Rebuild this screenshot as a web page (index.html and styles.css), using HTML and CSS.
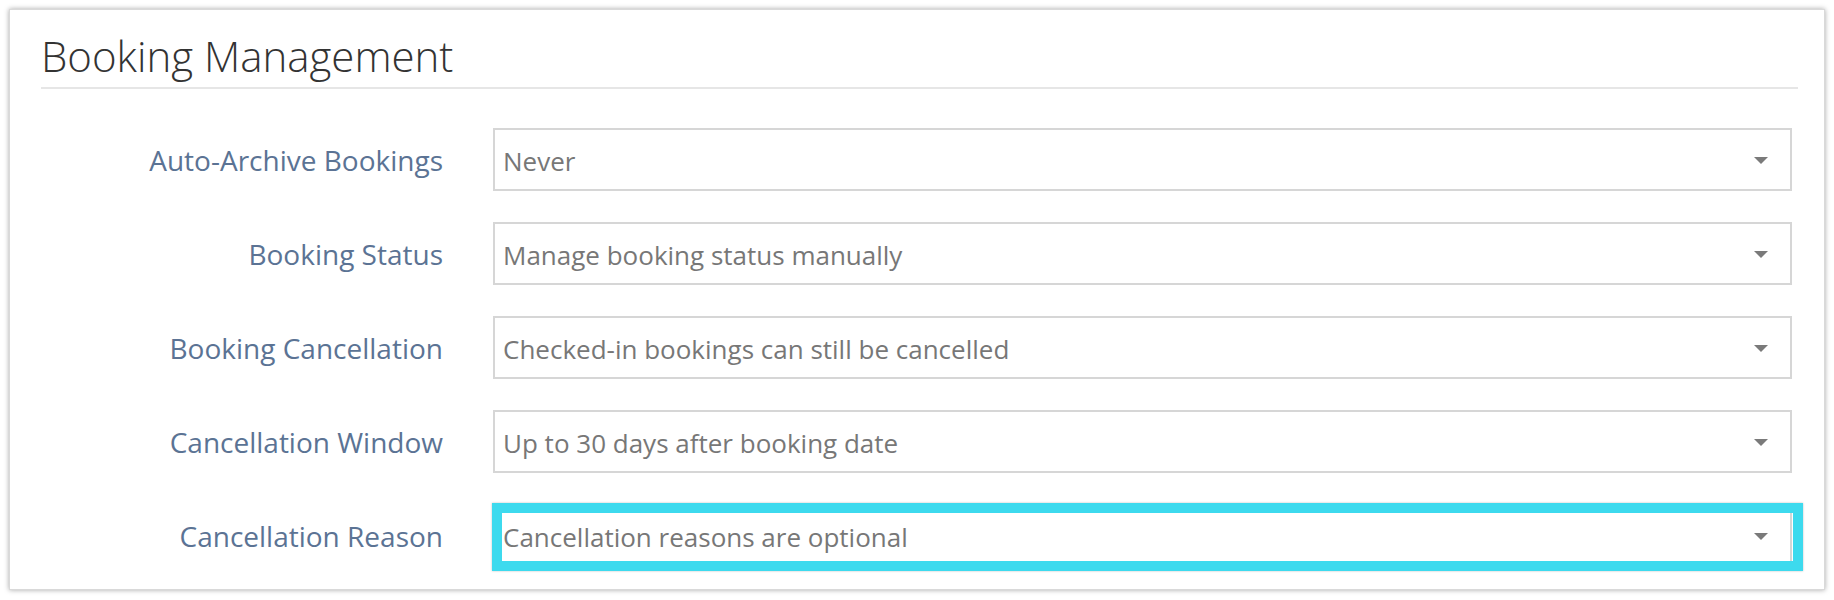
FILE: index.html
```html
<!DOCTYPE html>
<html lang="en">
<head>
<meta charset="utf-8">
<title>Booking Management</title>
<link rel="stylesheet" href="styles.css">
</head>
<body>
<div class="card">
  <h1 class="title">Booking Management</h1>
  <div class="form">
    <div class="label">Auto-Archive Bookings</div>
    <div class="select"><span class="value">Never</span><span class="caret"></span></div>

    <div class="label">Booking Status</div>
    <div class="select"><span class="value">Manage booking status manually</span><span class="caret"></span></div>

    <div class="label">Booking Cancellation</div>
    <div class="select"><span class="value">Checked-in bookings can still be cancelled</span><span class="caret"></span></div>

    <div class="label">Cancellation Window</div>
    <div class="select"><span class="value">Up to 30 days after booking date</span><span class="caret"></span></div>

    <div class="label">Cancellation Reason</div>
    <div class="select highlighted"><span class="value">Cancellation reasons are optional</span><span class="caret"></span><span class="highlight-box"></span></div>
  </div>
</div>
</body>
</html>
```

FILE: styles.css
```css
html, body {
  margin: 0;
  padding: 0;
  background: #ffffff;
}

body {
  padding: 9px;
  font-family: "Open Sans", "Liberation Sans", sans-serif;
}

.card {
  box-sizing: border-box;
  height: 581px;
  background: #ffffff;
  border: 1px solid #d9d9d9;
  box-shadow: 0 0 5px rgba(0, 0, 0, 0.35);
  padding: 21px 26px 0 31px;
}

.title {
  margin: 0;
  font-size: 42px;
  line-height: 50px;
  font-weight: 300;
  color: #333333;
  padding-bottom: 6px;
  border-bottom: 2px solid #e6e6e6;
}

.form {
  display: grid;
  grid-template-columns: 402px 1fr;
  column-gap: 50px;
  row-gap: 31px;
  margin-top: 39px;
  margin-right: 6px;
}

.label {
  display: flex;
  align-items: center;
  justify-content: flex-end;
  font-size: 28px;
  color: #5b7394;
}

.select {
  position: relative;
  box-sizing: border-box;
  height: 63px;
  border: 2px solid #d6d6d6;
  display: flex;
  align-items: center;
  padding: 2px 22px 0 8px;
  font-size: 26px;
  color: #777777;
}

.value {
  flex: 1;
}

.caret {
  width: 0;
  height: 0;
  border-left: 7.5px solid transparent;
  border-right: 7.5px solid transparent;
  border-top: 7px solid #7a7a7a;
}

.highlight-box {
  position: absolute;
  left: -3px;
  top: -3px;
  right: -13px;
  bottom: -6px;
  border: 10px solid #3ddaee;
  box-shadow: 0 0 2px rgba(0, 0, 0, 0.25);
}
```
